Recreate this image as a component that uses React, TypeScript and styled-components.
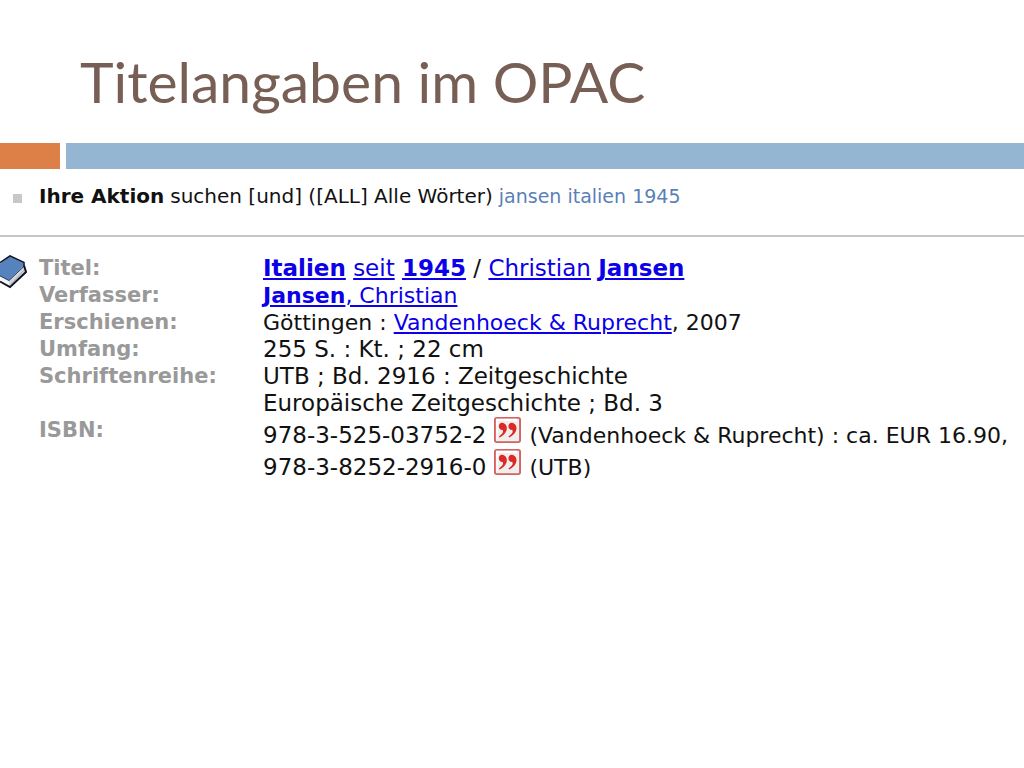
import React from "react";
import styled, { createGlobalStyle } from "styled-components";

const GlobalStyle = createGlobalStyle`
  body {
    margin: 0;
    background: #ffffff;
    color: #111111;
    font-family: Verdana, "DejaVu Sans", sans-serif;
  }
`;

const Slide = styled.main`
  min-height: 100vh;
  overflow-x: hidden;
`;

const Title = styled.h1`
  margin: 0;
  padding: 45px 80px 26px;
  color: #775f55;
  font: 400 57px/72px "Tw Cen MT", Lato, sans-serif;
`;

const Band = styled.div`
  display: grid;
  grid-template-columns: 60px 1fr;
  column-gap: 6px;
  height: 26px;
`;

const BandPart = styled.div<{ $color: string }>`
  background: ${(p) => p.$color};
`;

const Action = styled.p`
  display: flex;
  align-items: center;
  gap: 6px;
  margin: 0;
  padding: 13px 0 25px 13px;
  border-bottom: 2px solid #c6c6c6;
  font-size: 20px;
  line-height: 28px;
  white-space: nowrap;
`;

const Bullet = styled.span`
  width: 9px;
  height: 9px;
  margin: 4px 11px 0 0;
  background: #c8c8c8;
`;

const Query = styled.span`
  color: #5a7fb8;
  font-size: 19px;
`;

const Result = styled.section`
  display: grid;
  grid-template-columns: 27px 1fr;
  column-gap: 12px;
  padding-top: 18px;
`;

const Details = styled.dl`
  display: grid;
  grid-template-columns: 224px 1fr;
  margin: 0;
  line-height: 27px;
  white-space: nowrap;
`;

const Label = styled.dt`
  color: #999999;
  font-size: 21px;
  font-weight: 700;
`;

const Value = styled.dd<{ $compact?: boolean }>`
  margin: 0;
  font-size: ${(p) => (p.$compact ? 22 : 23)}px;
`;

const IsbnLine = styled.div`
  display: flex;
  align-items: baseline;
  gap: 8px;
  height: 32px;
  line-height: 22px;
`;

const Note = styled.span`
  font-size: 22px;
`;

const Link = styled.a`
  color: #0b00e8;
  text-decoration: underline;
  text-decoration-thickness: 2px;
  text-underline-offset: 2px;
`;

const Book = styled.svg`
  display: block;
  width: 27px;
  height: 34px;
`;

const Quote = styled.svg`
  width: 27px;
  height: 26px;
`;

const BookIcon = () => (
  <Book viewBox="0 0 27 36" preserveAspectRatio="none" aria-hidden="true">
    <path d="M0 21 9 26 24 9 26 18 11 34 0 28Z" fill="#d3d5dd" />
    <path d="M0 23 9 28V33L0 28Z" fill="#f7f7f7" />
    <path d="M0 9 10 1 24 9 23 12 9 27 0 22Z" fill="#5682bd" />
    <path d="M11 31 24 16" stroke="#aaaab5" fill="none" />
    <path d="M0 8 10 1 24 8 24 12" stroke="#101421" strokeWidth="1.5" fill="none" />
    <path d="M24 12 9 27 0 22" stroke="#26395c" fill="none" />
    <path d="M24 11 26 18 10 34 0 28" stroke="#101421" strokeWidth="2" fill="none" />
  </Book>
);

const QuoteIcon = () => (
  <Quote viewBox="0 0 28 28" preserveAspectRatio="none" aria-hidden="true">
    <rect x="1" y="1" width="26" height="26" rx="2" fill="#f3eeee" stroke="#d4635f" strokeWidth="2" />
    <path d="M3 24V3H24" fill="none" stroke="#ffffff" strokeWidth="2" />
    <path d="M5 10C5 6 9 5 12 8C15 12 13 18 6 22L5 21C9 18 10 16 9 14C6 14 5 12 5 10Z" fill="#dc2926" />
    <path d="M15 10C15 6 19 5 22 8C25 12 23 18 16 22L15 21C19 18 20 16 19 14C16 14 15 12 15 10Z" fill="#dc2926" />
  </Quote>
);

export default function App() {
  return (
    <>
      <GlobalStyle />
      <Slide>
        <Title>Titelangaben im OPAC</Title>
        <Band>
          <BandPart $color="#dd8047" />
          <BandPart $color="#94b6d2" />
        </Band>
        <Action>
          <Bullet />
          <b>Ihre Aktion</b>
          <span>suchen [und] ([ALL] Alle Wörter)</span>
          <Query>jansen italien 1945</Query>
        </Action>
        <Result>
          <BookIcon />
          <Details>
            <Label>Titel:</Label>
            <Value>
              <Link href="#italien"><b>Italien</b></Link> <Link href="#seit">seit</Link>{" "}
              <Link href="#1945"><b>1945</b></Link> / <Link href="#christian">Christian</Link>{" "}
              <Link href="#jansen"><b>Jansen</b></Link>
            </Value>
            <Label>Verfasser:</Label>
            <Value $compact>
              <Link href="#verfasser"><b>Jansen</b>, Christian</Link>
            </Value>
            <Label>Erschienen:</Label>
            <Value $compact>
              Göttingen : <Link href="#verlag">Vandenhoeck &amp; Ruprecht</Link>, 2007
            </Value>
            <Label>Umfang:</Label>
            <Value>255 S. : Kt. ; 22 cm</Value>
            <Label>Schriftenreihe:</Label>
            <Value>
              UTB ; Bd. 2916 : Zeitgeschichte
              <br />
              Europäische Zeitgeschichte ; Bd. 3
            </Value>
            <Label>ISBN:</Label>
            <Value>
              <IsbnLine>
                <span>978-3-525-03752-2</span>
                <QuoteIcon />
                <Note>(Vandenhoeck &amp; Ruprecht) : ca. EUR 16.90,</Note>
              </IsbnLine>
              <IsbnLine>
                <span>978-3-8252-2916-0</span>
                <QuoteIcon />
                <Note>(UTB)</Note>
              </IsbnLine>
            </Value>
          </Details>
        </Result>
      </Slide>
    </>
  );
}
